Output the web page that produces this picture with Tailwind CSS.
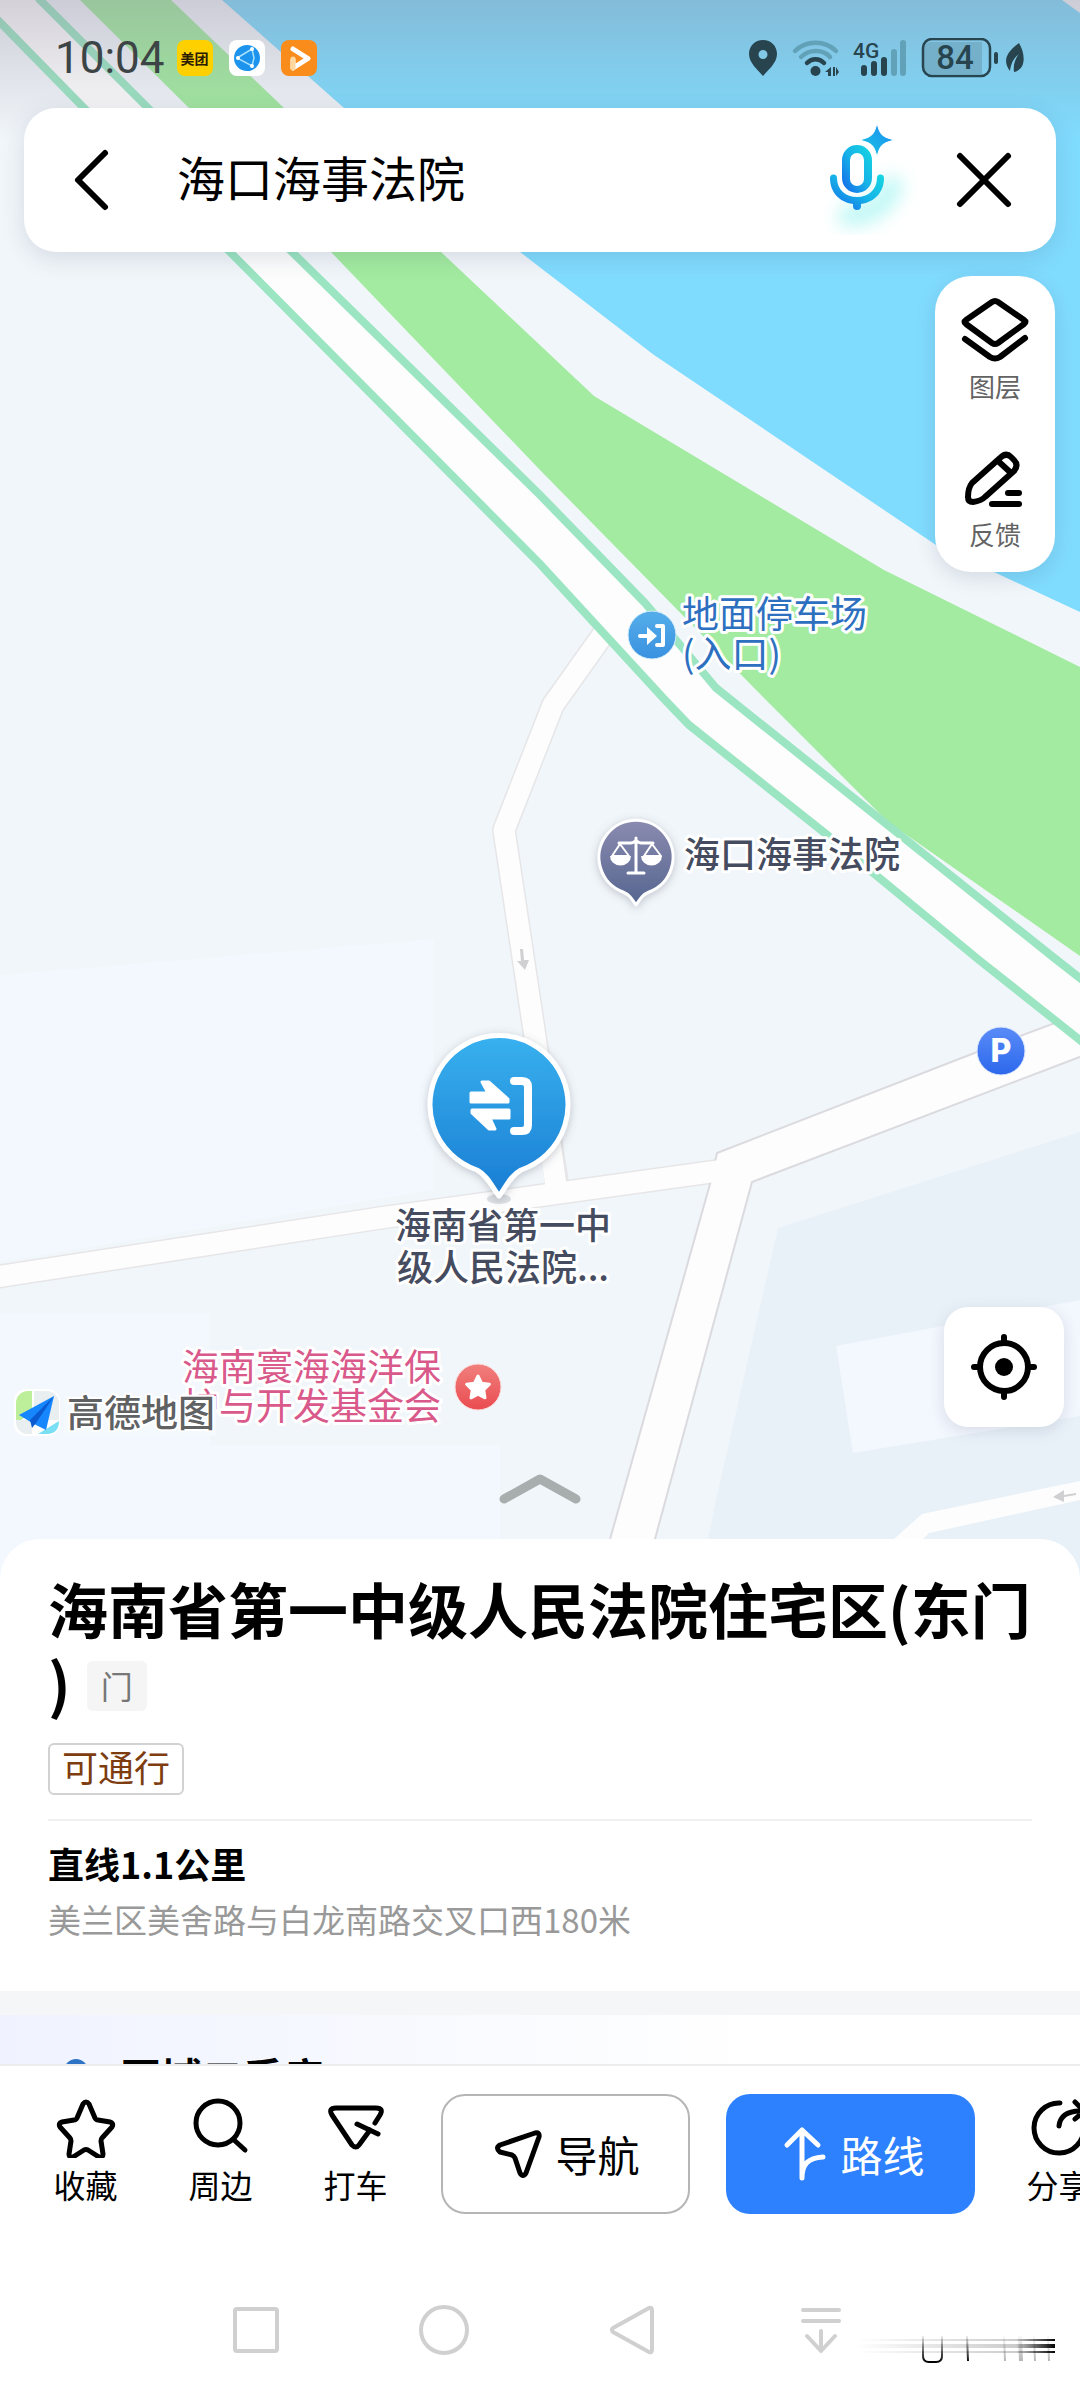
<!DOCTYPE html>
<html lang="zh-CN">
  <head>
    <meta charset="utf-8" />
    <meta name="viewport" content="width=device-width, initial-scale=1" />
    <title>高德地图</title>
    <script src="https://cdn.jsdelivr.net/npm/@tailwindcss/browser@4"></script>
  </head>
  <body class="flex h-screen flex-col overflow-hidden bg-white font-['Noto_Sans_CJK_SC',sans-serif] text-black">
    <!-- Map -->
    <main class="relative min-h-0 flex-1 overflow-hidden bg-[#f1f6fa]">
      <svg class="absolute inset-0 h-full w-full" viewBox="0 0 1080 1580" preserveAspectRatio="xMidYMin slice">
        <defs>
          <linearGradient id="shade" x1="0" y1="0" x2="0" y2="1">
            <stop offset="0" stop-color="#8a8398" stop-opacity=".36" />
            <stop offset="1" stop-color="#8a8398" stop-opacity="0" />
          </linearGradient>
          <linearGradient id="pinBlue" x1="0" y1="0" x2="0" y2="1">
            <stop offset="0" stop-color="#38b1ef" />
            <stop offset="1" stop-color="#1a7dd3" />
          </linearGradient>
          <linearGradient id="pinGrey" x1="0" y1="0" x2="0" y2="1">
            <stop offset="0" stop-color="#8b8bb0" />
            <stop offset="1" stop-color="#55658f" />
          </linearGradient>
          <linearGradient id="gate" x1="0" y1="0" x2="0" y2="1">
            <stop offset="0" stop-color="#55aeea" />
            <stop offset="1" stop-color="#3a91e0" />
          </linearGradient>
          <linearGradient id="park" x1="0" y1="0" x2="0" y2="1">
            <stop offset="0" stop-color="#5a8cf8" />
            <stop offset="1" stop-color="#2c68ec" />
          </linearGradient>
          <linearGradient id="fund" x1="0" y1="0" x2="0" y2="1">
            <stop offset="0" stop-color="#f0807d" />
            <stop offset="1" stop-color="#ea4b50" />
          </linearGradient>
          <filter id="soft" x="-30%" y="-30%" width="160%" height="160%">
            <feDropShadow dx="0" dy="2" stdDeviation="4" flood-color="#5b6472" flood-opacity=".35" />
          </filter>
        </defs>

        <!-- blocks -->
        <path fill="#f3f8fe" d="M0 975 434 939V1190L0 1262zM0 1314H210V1580H0zM210 1445H500V1580H210z" />
        <path fill="#e9f1f8" d="M778 1228 1080 1132V1580H700L716 1500z" />
        <path fill="#f3f7fe" d="M836 1346 1080 1300V1416L853 1453z" />
        <!-- water and park -->
        <path fill="#80dcfe" d="M222 0H1062L1080 13V612L936 545 654 355 520 252 344 108z" />
        <path fill="#a2eba0" d="M80 0H171L284 108 441 252 594 396 884 570 1080 667V956L888 822 766 700 540 470 331 252 189 108z" />

        <!-- streets -->
        <g fill="none" stroke-linejoin="round">
          <path stroke="#e6e6e8" stroke-width="24" d="M612 622 553 705 504 830 534 1030 558 1190" />
          <path stroke="#e6e6e8" stroke-width="24" d="M-10 1278 380 1218 725 1170" />
          <path stroke="#fdfdfd" stroke-width="21" d="M612 622 553 705 504 830 534 1030 558 1200" />
        </g>
        <path fill="#fdfdfd" stroke="#dadadf" stroke-width="2" d="M717 1153 977 1052 1090 1010V1053L752 1182 652 1550H607L710 1184z" />
        <path fill="none" stroke="#fdfdfd" stroke-width="21" d="M-10 1278 380 1218 725 1170" />
        <path fill="#fdfdfd" d="M893 1540 922 1514 1080 1481V1500L929 1533 922 1540z" />
        <path fill="#d0d0d3" d="M520 949h3l1 11h5l-4 10-8-9h4zM1053 1497l11-7v5l12-2v2l-12 2v5z" />

        <!-- expressway -->
        <path fill="#fdfdfd" d="M-10 12 84 108 230 252 540 564 665 700 689 725 826 834 979 960 1090 1048V986L1053 957 716 688 645 603 540 495 292 252 148 108 38-2H-10z" />
        <g fill="none" stroke="#9be5c2" stroke-width="8">
          <path d="M-10 12 84 108 230 252 540 564 665 700 689 725 826 834 979 960 1090 1048" />
          <path d="M38-2 148 108 292 252 540 495 645 603 716 688 1053 957 1090 986" />
        </g>
        <path fill="url(#shade)" d="M0 0H1080V140H0z" />

        <!-- parking entrance -->
        <circle cx="652" cy="635" r="24" fill="url(#gate)" stroke="#d9effb" stroke-width="1" />
        <g fill="none" stroke="#fff" stroke-width="4" stroke-linecap="round" stroke-linejoin="round">
          <path d="M640 636h11" />
          <path d="M657 626h6v19h-6" />
        </g>
        <path fill="#fff" d="M647 627l10 9-10 9z" />

        <!-- maritime court -->
        <g filter="url(#soft)">
          <path fill="url(#pinGrey)" stroke="#fff" stroke-width="3" stroke-linejoin="round" d="M636 905c-4-6-6-10-13-13a37 37 0 1 1 26 0c-7 3-9 7-13 13z" />
        </g>
        <g fill="none" stroke="#fff" stroke-width="3" stroke-linecap="round" stroke-linejoin="round">
          <path d="M636 838v34M628 873h16M619 843h12c3 0 3-2 5-2s2 2 5 2h12" />
          <path d="M620 844l-8 12h17zM652 844l-8 12h17z" stroke-width="2" />
        </g>
        <path fill="#fff" d="M610 856h21a10 9 0 0 1-21 0zM641 856h21a10 9 0 0 1-21 0z" />

        <!-- car park -->
        <circle cx="1001" cy="1051" r="24" fill="url(#park)" stroke="#dfe9ff" stroke-width="1" />
        <text x="1001" y="1062" text-anchor="middle" class="fill-white font-['Inter','Noto_Sans',sans-serif] text-[32px] font-extrabold">P</text>

        <!-- selected gate -->
        <ellipse cx="499" cy="1199" rx="12" ry="5" fill="#a8b0b8" opacity=".4" />
        <g filter="url(#soft)">
          <path fill="url(#pinBlue)" stroke="#fff" stroke-width="5" stroke-linejoin="round" d="M499 1196c-7-9-11-20-22-26a69 69 0 1 1 44 0c-11 6-15 17-22 26z" />
        </g>
        <path fill="#fff" stroke="#fff" stroke-width="3" stroke-linejoin="round" d="M471 1093h17l-6-11h7l19 17v3h-37zM509 1110h-37v3l17 16h6l-5-11h19z" />
        <path fill="none" stroke="#fff" stroke-width="8" stroke-linecap="round" stroke-linejoin="round" d="M514 1081h8c4 0 6 2 6 6v38c0 4-2 6-6 6h-8" />

        <!-- foundation -->
        <circle cx="478" cy="1387" r="23" fill="url(#fund)" stroke="#fbdcdc" stroke-width="1" />
        <path fill="#fff" stroke="#fff" stroke-width="3" stroke-linejoin="round" d="M478 1376l3.500 7.200 7.900 1.100-5.700 5.600 1.300 7.900-7-3.700-7 3.700 1.300-7.900-5.700-5.600 7.900-1.100z" />

        <g stroke="#fff" stroke-width="6" stroke-linejoin="round" paint-order="stroke" class="text-[36px]">
          <g fill="#2d70bf" class="text-[37px]">
            <text x="682" y="628">地面停车场</text>
            <text x="682" y="668">(入口)</text>
          </g>
          <g fill="#464c60" class="font-medium">
            <text x="684" y="868">海口海事法院</text>
            <text x="503" y="1239" text-anchor="middle">海南省第一中</text>
            <text x="503" y="1281" text-anchor="middle">级人民法院...</text>
          </g>
          <g fill="#d9598a" text-anchor="end" class="text-[37px]">
            <text x="441" y="1381">海南寰海海洋保</text>
            <text x="441" y="1420">护与开发基金会</text>
          </g>
        </g>

        <!-- map brand -->
        <path fill="#f4f9fd" d="M64 1396H216V1436H64z" />
        <rect x="14" y="1389" width="46" height="47" rx="12" fill="#fff" />
        <path fill="#bdee9a" d="M16 1403a12 12 0 0 1 12-12h4v22l-16 10z" />
        <path fill="#e9eff1" d="M34 1391h13a12 12 0 0 1 12 12v17H34zM16 1420h16v14h-4a12 12 0 0 1-12-12z" />
        <path fill="#7adff5" d="M38 1434l21-13c0 8-4 13-12 13z" />
        <path fill="#1787ff" d="M19 1415 54 1396 46 1430 34 1424z" />
        <path fill="#0a5bd0" d="M54 1396 30 1420 32 1428 36 1423z" />
        <text x="67" y="1427" fill="#5f6163" stroke="#fff" stroke-width="4" paint-order="stroke" class="text-[37px] font-medium">高德地图</text>
      </svg>

      <!-- Status bar -->
      <header class="relative flex h-[108px] items-center justify-between pr-[54px] pl-[55px] pb-1 pt-3">
        <div class="flex items-center gap-4">
          <time class="-mr-1 font-[Roboto,sans-serif] text-[44px] leading-none text-[#3c4446]">10:04</time>
          <span class="grid size-9 place-items-center rounded-lg bg-[#ffd000] text-[14px] font-bold leading-none text-[#2a1c00]">美团</span>
          <svg class="size-9" viewBox="0 0 36 36">
            <rect width="36" height="36" rx="8" fill="#fff" />
            <circle cx="18" cy="18" r="13" fill="#1c94ee" />
            <path d="M23 9 8 18 23 26 25 18z" fill="none" stroke="#a6e0fb" stroke-width="1.500" />
            <g fill="#fff"><circle cx="23" cy="9" r="2" /><circle cx="9" cy="18" r="2" /><circle cx="23" cy="26" r="2" /></g>
          </svg>
          <svg class="size-9" viewBox="0 0 36 36">
            <rect width="36" height="36" rx="8" fill="#f98c1a" />
            <path d="M12 9 27 18.500 12 28v-8" fill="none" stroke="#fff" stroke-width="5" stroke-linecap="round" stroke-linejoin="round" />
            <path d="M12 19v9" stroke="#ffd9a0" stroke-width="5" stroke-linecap="round" />
          </svg>
        </div>
        <svg class="h-10 w-[278px]" viewBox="748 37 278 40">
          <path fill="#27444f" fill-rule="evenodd" d="M763 39c8 0 14 6 14 14 0 9-9 16-14 22-5-6-14-13-14-22 0-8 6-14 14-14zm0 10a4.500 4.500 0 1 0 0 9 4.500 4.500 0 0 0 0-9z" />
          <g fill="none" stroke-width="4.500" stroke-linecap="round">
            <path stroke="#62a2b9" d="M795 50c11-11 30-11 41 0M801 56c8-8 22-8 29 0" />
            <path stroke="#27444f" d="M807 62c5-5 12-5 17 0" />
          </g>
          <circle cx="815.500" cy="70" r="5" fill="#27444f" />
          <path fill="#27444f" d="M825 71l6-5v9h-3v-4zM833 66h2v9h-2zM836 66l3 5-3 4z" />
          <text x="853" y="57" fill="#27444f" class="font-[Roboto,sans-serif] text-[21px] font-medium">4G</text>
          <g stroke-width="6" stroke-linecap="round">
            <path stroke="#27444f" d="M864 67v5M874 63v9M884 59v13" />
            <path stroke="#62a2b9" d="M894 51v21M903 42v30" />
          </g>
          <path fill="#74b0c9" d="M930 41h52v32h-52a6 6 0 0 1-6-6V47a6 6 0 0 1 6-6z" />
          <rect x="923" y="38" width="67" height="37" rx="9" fill="none" stroke="#27444f" stroke-width="2.500" />
          <text x="955" y="68" fill="#27444f" text-anchor="middle" class="font-[Roboto,sans-serif] text-[33px] font-medium">84</text>
          <path stroke="#27444f" stroke-width="4" stroke-linecap="round" d="M996 53v8" />
          <path fill="#27444f" d="M1019 42c6 10 8 26-5 29-1-7 1-13 5-18-6 5-8 10-9 17-7-9-5-18 9-28z" />
        </svg>
      </header>

      <!-- Search -->
      <form class="relative mx-6 flex h-36 items-center rounded-[32px] bg-white shadow-[0_6px_24px_rgba(40,60,90,0.14)]">
        <button type="button" aria-label="返回" class="ml-[43px] shrink-0">
          <svg class="h-[68px] w-12" viewBox="67 146 48 68" fill="none" stroke="#000" stroke-width="6" stroke-linecap="round" stroke-linejoin="round">
            <path d="M105 153 78 180 105 207" />
          </svg>
        </button>
        <input aria-label="搜索" value="海口海事法院" class="ml-[62px] min-w-0 flex-1 pb-2 text-[48px] leading-[72px] outline-none" />
        <button type="button" aria-label="语音搜索" class="mr-[36px] shrink-0">
          <svg class="h-[120px] w-[100px]" viewBox="818 120 100 120">
            <defs>
              <linearGradient id="mic" x1="0" y1="1" x2="1" y2="0">
                <stop offset="0" stop-color="#1463ea" />
                <stop offset=".5" stop-color="#16b2e8" />
                <stop offset="1" stop-color="#16d8e0" />
              </linearGradient>
              <linearGradient id="spark" x1="0" y1="1" x2="1" y2="0">
                <stop offset="0" stop-color="#18ccdf" />
                <stop offset="1" stop-color="#1d86f5" />
              </linearGradient>
              <filter id="glow" x="-50%" y="-50%" width="200%" height="200%"><feGaussianBlur stdDeviation="9" /></filter>
            </defs>
            <path d="M840 214c24 6 48-6 54-36" fill="none" stroke="#8ef3ee" stroke-width="20" opacity=".6" filter="url(#glow)" />
            <path fill="url(#mic)" fill-rule="evenodd" d="M857 145a15 15 0 0 1 15 15v18a15 15 0 0 1-30 0v-18a15 15 0 0 1 15-15zm0 8a7 7 0 0 0-7 7v19a7 7 0 0 0 14 0v-19a7 7 0 0 0-7-7z" />
            <path fill="url(#mic)" d="M837 178a3.500 3.500 0 0 0-7 0c0 14 9 24 23 26v2a4 4 0 0 0 8 0v-2c14-2 23-12 23-26a3.500 3.500 0 0 0-7 0c0 12-9 19-20 19s-20-7-20-19z" />
            <path fill="url(#spark)" stroke="#fff" stroke-width="1" d="M877 123c3 12 5 14 18 17-13 3-15 5-18 17-3-12-5-14-18-17 13-3 15-5 18-17z" />
          </svg>
        </button>
        <button type="button" aria-label="清除" class="mr-[42px] shrink-0">
          <svg class="size-[60px]" viewBox="954 150 60 60" fill="none" stroke="#000" stroke-width="6" stroke-linecap="round">
            <path d="M960 156 1008 204M1008 156 960 204" />
          </svg>
        </button>
      </form>

      <!-- Map tools -->
      <aside class="absolute top-[276px] right-[25px] flex w-[120px] flex-col items-center gap-10 rounded-[36px] bg-white py-5 text-[26px] leading-9 text-[#636363] shadow-[0_6px_20px_rgba(40,60,90,0.14)]">
        <button type="button" class="flex flex-col items-center gap-1">
          <svg class="h-[68px] w-20" viewBox="955 296 80 68" fill="none" stroke="#000" stroke-width="6" stroke-linecap="round" stroke-linejoin="round">
            <path d="M992 302q3-2 6 0l26 18q3 2 0 4l-26 19q-3 2-6 0l-26-19q-3-2 0-4z" />
            <path d="M965 339l25 18q5 3 10 0l25-19" />
          </svg>
          图层
        </button>
        <button type="button" class="flex flex-col items-center gap-1">
          <svg class="h-[68px] w-20" viewBox="955 442 80 68" fill="none" stroke="#000" stroke-width="6" stroke-linecap="round" stroke-linejoin="round">
            <path d="M1000 456q6-6 11-1l3 3q5 5 0 11l-29 26q-4 4-12 5-5 0-5-5 0-9 4-14z" />
            <path d="M998 459l12 11M1008 491h11M992 502h27" />
          </svg>
          反馈
        </button>
      </aside>

      <button type="button" aria-label="定位" class="absolute right-4 bottom-[152px] grid size-[120px] place-items-center rounded-3xl bg-white shadow-[0_4px_16px_rgba(40,60,90,0.14)]">
        <svg class="size-[70px]" viewBox="-35 -35 70 70" fill="none" stroke="#000" stroke-width="6" stroke-linecap="round">
          <circle r="24" />
          <circle r="9" fill="#000" stroke="none" />
          <path d="M0-30v4M0 30v-4M-30 0h4M30 0h-4" />
        </svg>
      </button>

      <button type="button" aria-label="展开" class="absolute bottom-[68px] left-1/2 -translate-x-1/2">
        <svg class="h-10 w-[90px]" viewBox="495 1472 90 40" fill="none" stroke="#a8aeae" stroke-width="9" stroke-linecap="round" stroke-linejoin="round">
          <path d="M504 1500 540 1480 576 1500" />
        </svg>
      </button>
    </main>

    <!-- Place details -->
    <section class="relative -mt-10 rounded-t-[40px] bg-white px-12 pt-8 pb-12">
      <h1 class="text-[60px] leading-[74px] font-bold [line-break:anywhere]">海南省第一中级人民法院住宅区(东门)<span class="mt-4 ml-4 inline-block h-[50px] rounded-md bg-[#f5f5f5] px-[14px] align-top text-[32px] leading-[48px] font-normal text-[#777]">门</span></h1>
      <p class="mt-6 w-fit rounded-md border-2 border-[#d2d2d2] px-3 pb-[6px] text-[36px] leading-[42px] text-[#7d3d10]">可通行</p>
      <div class="mt-6 border-t-2 border-[#f0f0f0] pt-[18px]">
        <p class="text-[36px] leading-[48px] font-bold">直线1.1公里</p>
        <p class="mt-2 text-[33px] leading-[48px] text-[#999]">美兰区美舍路与白龙南路交叉口西180米</p>
      </div>
    </section>

    <!-- Next card, mostly under the toolbar -->
    <section class="h-[73px] shrink-0 overflow-hidden border-t-[24px] border-[#f5f6f7] bg-linear-to-r from-[#f0f3ff] to-white to-70%">
      <h2 class="flex items-start gap-8 pt-[30px] pl-16 text-[41px] leading-[60px] font-bold">
        <span class="mt-[14px] size-6 rounded-full bg-[#2f74c4]"></span>
        区域二手房
      </h2>
    </section>

    <!-- Toolbar -->
    <footer class="relative shrink-0 overflow-hidden border-t-2 border-[#ececec] bg-white pt-7">
      <div class="flex h-[120px] items-start pl-[18px] text-[32px] leading-[44px]">
        <button type="button" class="flex w-[135px] shrink-0 flex-col items-center gap-1">
          <svg class="h-16 w-[70px]" viewBox="50 2096 70 64" fill="none" stroke="#000" stroke-width="5" stroke-linejoin="round">
            <path d="M82 2106q3-4 6 0l6 14q1 2 3 2l12 2q4 1 2 5l-10 11q-1 1-1 3l2 13q0 4-4 3l-11-7q-2-1-4 0l-11 7q-4 1-4-3l2-13q0-2-1-3l-10-11q-2-4 2-5l12-2q2 0 3-2z" />
          </svg>
          收藏
        </button>
        <button type="button" class="flex w-[135px] shrink-0 flex-col items-center gap-1">
          <svg class="h-16 w-[70px]" viewBox="184 2096 70 64" fill="none" stroke="#000" stroke-width="5" stroke-linecap="round">
            <circle cx="216" cy="2125" r="22" />
            <path d="M232 2142l11 10" />
          </svg>
          周边
        </button>
        <button type="button" class="flex w-[135px] shrink-0 flex-col items-center gap-1">
          <svg class="h-16 w-[70px]" viewBox="320 2096 70 64" fill="none" stroke="#000" stroke-width="5" stroke-linecap="round" stroke-linejoin="round">
            <path d="M374 2125l5-8q4-7-4-7h-40q-8 0-4 7l20 30q4 4 7 0l11-15M356 2126l21 10" />
          </svg>
          打车
        </button>
        <button type="button" class="ml-[18px] flex h-[120px] w-[249px] shrink-0 items-center justify-center gap-2 rounded-3xl border-2 border-[#b5b5b5] text-[42px]">
          <svg class="size-14" viewBox="493 2127 56 56" fill="none" stroke="#000" stroke-width="5" stroke-linejoin="round">
            <path d="M502 2146l35-12q5-1 4 4l-13 36q-3 5-6 0l-5-15q-1-2-3-3l-12-3q-5-4 0-7z" />
          </svg>
          导航
        </button>
        <button type="button" class="ml-9 flex h-[120px] w-[249px] shrink-0 items-center justify-center gap-2 rounded-3xl bg-[#2d81ff] text-[42px] text-white">
          <svg class="size-14" viewBox="776 2127 56 56" fill="none" stroke="#fff" stroke-width="5" stroke-linecap="round" stroke-linejoin="round">
            <path d="M787 2146l15-15 16 15M802 2131v48M802 2179c0-14 6-20 21-21" />
          </svg>
          路线
        </button>
        <button type="button" class="ml-[16px] flex w-[135px] shrink-0 flex-col items-center gap-1">
          <svg class="h-16 w-[70px]" viewBox="1025 2096 70 64" fill="none" stroke="#000" stroke-width="5" stroke-linecap="round" stroke-linejoin="round">
            <path d="M1061 2105a25 25 0 1 0 24 24M1060 2128c1-10 8-15 22-15M1076 2104l9 9-9 8" />
          </svg>
          分享
        </button>
      </div>

      <nav class="mt-20 mb-[22px] flex h-[72px] items-center justify-around pr-[165px] pl-[162px]">
        <button type="button" aria-label="最近任务">
          <svg class="size-14" viewBox="-28 -28 56 56" fill="none" stroke="#d0d0d0" stroke-width="4"><rect x="-21" y="-21" width="42" height="42" rx="2" /></svg>
        </button>
        <button type="button" aria-label="主屏幕">
          <svg class="size-14" viewBox="-28 -28 56 56" fill="none" stroke="#d0d0d0" stroke-width="4"><circle r="23" /></svg>
        </button>
        <button type="button" aria-label="返回">
          <svg class="size-14" viewBox="-28 -28 56 56" fill="none" stroke="#d0d0d0" stroke-width="4" stroke-linejoin="round"><path d="M16-22q3-1 3 2v40q0 3-3 2l-36-20q-2-2 0-4z" /></svg>
        </button>
        <button type="button" aria-label="下拉通知">
          <svg class="size-14" viewBox="-28 -28 56 56" fill="none" stroke="#d0d0d0" stroke-width="4" stroke-linecap="round" stroke-linejoin="round"><path d="M-18-20h36M-18-9h36M0 1v20M-14 6 0 21 14 6" /></svg>
        </button>
      </nav>

      <!-- faded mark in the corner -->
      <svg class="absolute right-6 bottom-5 h-9 w-[204px]" viewBox="852 2334 204 36">
        <defs>
          <linearGradient id="fadeX" gradientUnits="userSpaceOnUse" x1="855" y1="0" x2="1056" y2="0">
            <stop offset="0" stop-color="#000" stop-opacity="0" />
            <stop offset=".8" stop-color="#000" stop-opacity=".2" />
            <stop offset="1" stop-color="#000" />
          </linearGradient>
          <linearGradient id="fadeY" gradientUnits="userSpaceOnUse" x1="0" y1="2336" x2="0" y2="2364">
            <stop offset="0" stop-color="#000" stop-opacity="0" />
            <stop offset="1" stop-color="#000" />
          </linearGradient>
        </defs>
        <g fill="url(#fadeX)">
          <path d="M855 2341h200v2H855zM855 2346h200v4H855zM855 2353h200v2H855z" />
        </g>
        <g fill="none" stroke="url(#fadeY)" stroke-width="2">
          <path d="M923 2338v20q0 6 6 6h7q6 0 6-6v-20M967 2338l1 25" />
          <path opacity=".3" d="M1004 2338l1 25M1019 2338l1 25M1021 2338l1 25M1034 2338l1 25M1048 2338l1 25" />
        </g>
      </svg>
    </footer>
  </body>
</html>
